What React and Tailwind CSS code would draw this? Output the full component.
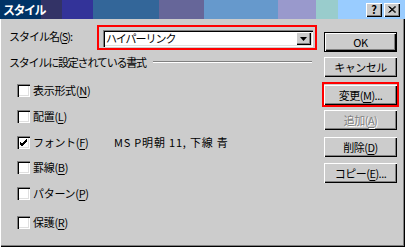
import React from 'react';

const font = { fontFamily: '"MS UI Gothic", "Noto Sans CJK JP", sans-serif' };

const raised =
  'shadow-[inset_1px_1px_0_#ffffff,inset_-1px_-1px_0_#000000,inset_-2px_-2px_0_#808080]';
const sunken =
  'shadow-[inset_1px_1px_0_#808080,inset_2px_2px_0_#000000,inset_-1px_-1px_0_#ffffff,inset_-2px_-2px_0_#dfdfdf]';

function Mn({ children }) {
  return <span className="underline underline-offset-2">{children}</span>;
}

function Btn({ children, disabled, def, className = '' }) {
  return (
    <div
      className={`w-[73px] h-[20px] bg-[#cccccc] flex items-center justify-center text-[11px] tracking-[-0.5px] ${
        def ? 'border border-black' : ''
      } ${className}`}
    >
      <div className={`w-full h-full flex items-center justify-center ${raised}`}>
        <span
          className={
            disabled ? 'text-[#808080] [text-shadow:1px_1px_0_#ffffff]' : 'text-black'
          }
        >
          {children}
        </span>
      </div>
    </div>
  );
}

function Check({ checked, label, extra, top }) {
  return (
    <div className={`flex items-center h-[13px] pl-[17px] ${top}`}>
      <div className={`w-[13px] h-[13px] bg-white shrink-0 flex items-center justify-center ${sunken}`}>
        {checked && (
          <svg width="9" height="9" viewBox="0 0 9 9">
            <path d="M1 4 L3 6 L8 1 M1 5 L3 7 L8 2 M1 6 L3 8 L8 3" stroke="#000" strokeWidth="1" fill="none" />
          </svg>
        )}
      </div>
      <span className="ml-[3px] w-[81px] text-[11px] leading-none tracking-[-0.3px]">{label}</span>
      {extra && <span className="text-[11px] leading-none tracking-[0.8px]">{extra}</span>}
    </div>
  );
}

export default function App() {
  return (
    <div
      className="w-[405px] h-[247px] bg-[#cccccc] overflow-hidden flex flex-col shadow-[inset_1px_0_0_#ffffff,inset_-1px_-1px_0_#000000,inset_-2px_-2px_0_#808080]"
      style={font}
    >
      {/* title bar */}
      <div className="h-[19px] shrink-0 flex items-center bg-[linear-gradient(to_right,#003366_0_41px,#333366_41px_62px,#333399_62px_93px,#336699_93px_159px,#666699_159px_204px,#6699cc_204px_278px,#9999cc_278px_316px,#99cccc_316px_338px,#99ccff_338px)]">
        <span className="pl-[3px] text-white font-bold text-[12px] tracking-[-1.5px] leading-none">
          スタイル
        </span>
        <div className="ml-auto mr-[5px] flex gap-[2px]">
          <div className={`w-[16px] h-[14px] bg-[#cccccc] flex items-center justify-center text-[11px] font-bold ${raised}`}>
            ?
          </div>
          <div className={`w-[16px] h-[14px] bg-[#cccccc] flex items-center justify-center ${raised}`}>
            <svg width="8" height="7" viewBox="0 0 8 7">
              <path d="M0.5 0.5 L7 6.5 M1.5 0.5 L8 6.5 M7 0.5 L0.5 6.5 M8 0.5 L1.5 6.5" stroke="#000" strokeWidth="1" />
            </svg>
          </div>
        </div>
      </div>

      <div className="flex flex-1">
        {/* left column */}
        <div className="w-[322px] flex flex-col">
          <div className="flex mt-[6px]">
            <div className="w-[97px] pl-[9px] pt-[6px] text-[11px] leading-none tracking-[-1px]">
              スタイル名(<Mn>S</Mn>):
            </div>
            <div className="w-[220px] h-[25px] border-2 border-[#ff0000] pl-[4px] pt-[3px]">
              <div className={`w-[210px] h-[17px] bg-white flex p-[2px] ${sunken}`}>
                <span className="flex-1 pl-[1px] text-[11px] leading-[13px] tracking-[-1px]">ハイパーリンク</span>
                <div className={`w-[15px] h-[13px] bg-[#cccccc] flex items-center justify-center ${raised}`}>
                  <svg width="7" height="4" viewBox="0 0 7 4">
                    <path d="M0 0 H7 L3.5 4 Z" fill="#000" />
                  </svg>
                </div>
              </div>
            </div>
          </div>

          <div className="flex items-center h-[14px] mt-[5px] pl-[9px] pr-[10px]">
            <span className="text-[11px] leading-none tracking-[-1.2px]">スタイルに設定されている書式</span>
            <div className="flex-1 ml-[7px] h-[2px] border-t border-[#808080] border-b border-b-white" />
          </div>

          <Check top="mt-[15px]" label={<>表示形式(<Mn>N</Mn>)</>} />
          <Check top="mt-[13px]" label={<>配置(<Mn>L</Mn>)</>} />
          <Check top="mt-[13px]" checked label={<>フォント(<Mn>F</Mn>)</>} extra="MS P明朝 11, 下線 青" />
          <Check top="mt-[12px]" label={<>罫線(<Mn>B</Mn>)</>} />
          <Check top="mt-[13px]" label={<>パターン(<Mn>P</Mn>)</>} />
          <Check top="mt-[16px]" label={<>保護(<Mn>R</Mn>)</>} />
        </div>

        {/* right column */}
        <div className="w-[77px] flex flex-col pt-[13px]">
          <Btn def className="ml-[2px]">OK</Btn>
          <Btn className="ml-[2px] mt-[5px]">キャンセル</Btn>
          <div className="mt-[5px] h-[25px] border-2 border-[#ff0000] pt-px">
            <Btn>
              変更(<Mn>M</Mn>)...
            </Btn>
          </div>
          <Btn disabled className="ml-[2px] mt-[3px]">
            追加(<Mn>A</Mn>)
          </Btn>
          <Btn className="ml-[2px] mt-[7px]">
            削除(<Mn>D</Mn>)
          </Btn>
          <Btn className="ml-[2px] mt-[6px]">
            コピー(<Mn>E</Mn>)...
          </Btn>
        </div>
      </div>
    </div>
  );
}
